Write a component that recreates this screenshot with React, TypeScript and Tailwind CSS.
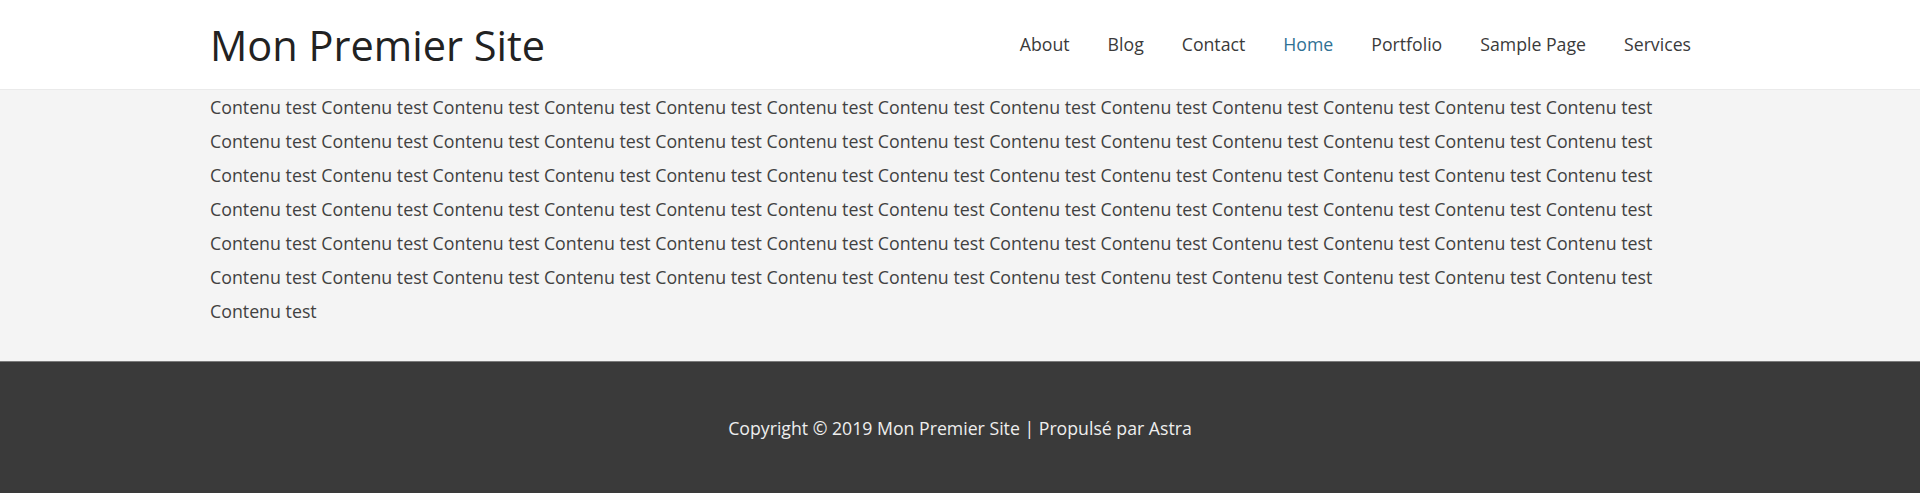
const NAV_LINKS = [
  { label: "About", active: false },
  { label: "Blog", active: false },
  { label: "Contact", active: false },
  { label: "Home", active: true },
  { label: "Portfolio", active: false },
  { label: "Sample Page", active: false },
  { label: "Services", active: false },
];

// contenu de test répété
const CONTENT = Array.from({ length: 79 }, () => "Contenu test").join(" ");

export default function App() {
  return (
    <div className="min-h-screen bg-[#f4f4f4] font-['Open_Sans',sans-serif]">
      {/* HEADER */}
      <header className="bg-white border-b border-[#eaeaea]">
        <div className="mx-auto flex h-[89px] max-w-[1550px] items-center justify-between px-[25px]">
          <a href="#" className="pt-[3px] text-[41.5px] leading-none text-[#222]">
            Mon Premier Site
          </a>
          <nav aria-label="Menu principal">
            <ul className="flex items-center pb-[2px]">
              {NAV_LINKS.map((link) => (
                <li key={link.label}>
                  <a
                    href="#"
                    className={`block px-[19px] text-[17.7px] leading-[34px] ${
                      link.active ? "text-[#2f7194]" : "text-[#3a3a3a]"
                    }`}
                  >
                    {link.label}
                  </a>
                </li>
              ))}
            </ul>
          </nav>
        </div>
      </header>

      {/* CONTENU */}
      <main className="pb-[33px]">
        <div className="mx-auto max-w-[1550px] px-[25px]">
          <p className="text-[17.8px] leading-[34px] text-[#414141]">{CONTENT}</p>
        </div>
      </main>

      {/* FOOTER */}
      <footer className="border-t border-[#7a7a7a] bg-[#3a3a3a] pt-[49px] pb-[48px]">
        <p className="text-center text-[17.7px] leading-[34px] text-[#eeeeee]">
          Copyright © 2019 Mon Premier Site | Propulsé par Astra
        </p>
      </footer>
    </div>
  );
}
